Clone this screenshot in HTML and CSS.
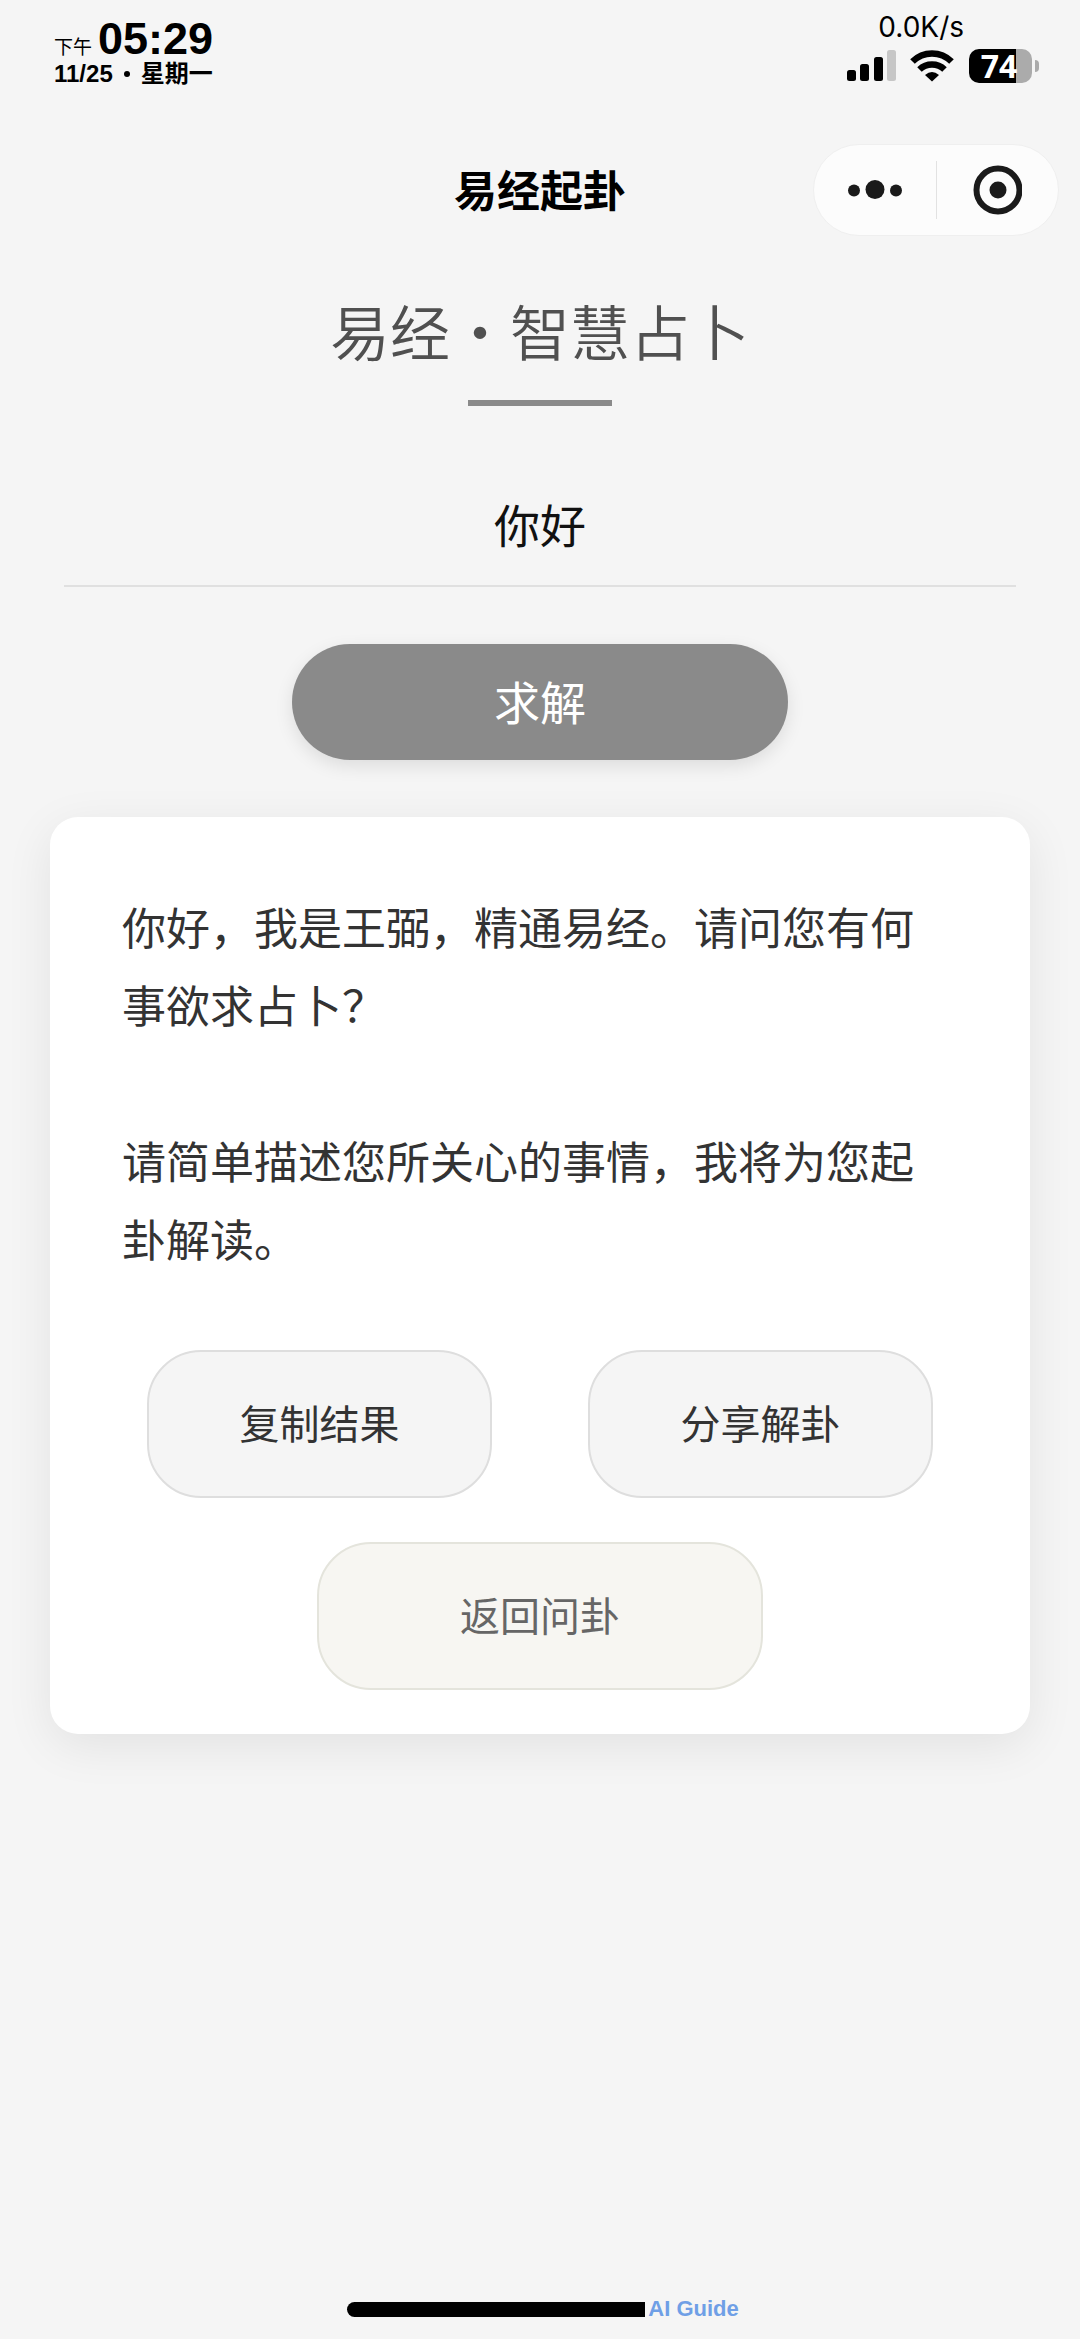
FILE: index.html
```html
<!DOCTYPE html>
<html lang="zh-CN">
<head>
<meta charset="utf-8">
<meta name="viewport" content="width=device-width, initial-scale=1">
<title>易经起卦</title>
<link rel="stylesheet" href="styles.css">
</head>
<body>
<div class="page">
  <div class="status">
    <div class="clock">
      <div class="clock-time"><span class="period">下午</span><time class="time">05:29</time></div>
      <div class="date">11/25<span class="date-dot"></span>星期一</div>
    </div>
    <div class="device">
      <div class="speed">0.0K/s</div>
      <div class="indicators">
        <svg class="signal" width="50" height="34" viewBox="0 0 50 34" aria-hidden="true">
          <rect x="0" y="21" width="9" height="11" rx="2.500"/>
          <rect x="13" y="15" width="9" height="17" rx="2.500"/>
          <rect x="27" y="8" width="9" height="24" rx="2.500"/>
          <rect x="40" y="1" width="9" height="31" rx="2.500" fill="#c6c6c6"/>
        </svg>
        <svg class="wifi" width="44" height="34" viewBox="0 0 44 34" aria-hidden="true">
          <path d="M2.500 12.500A27.500 27.500 0 0 1 41.500 12.500" fill="none" stroke="#000" stroke-width="6.500"/>
          <path d="M9.500 20.500A18 18 0 0 1 34.500 20.500" fill="none" stroke="#000" stroke-width="6.500"/>
          <path d="M22 32.500L15 26Q22 20 29 26Z"/>
        </svg>
        <div class="battery"><span class="battery-body">74</span><span class="battery-cap"></span></div>
      </div>
    </div>
  </div>

  <header class="navbar">
    <h1 class="nav-title">易经起卦</h1>
    <div class="capsule">
      <button class="capsule-btn" type="button" aria-label="更多">
        <svg width="54" height="50" viewBox="0 0 54 50"><circle cx="6" cy="25.500" r="6"/><circle cx="27" cy="24.500" r="9.500"/><circle cx="48" cy="25.500" r="6"/></svg>
      </button>
      <button class="capsule-btn" type="button" aria-label="关闭">
        <svg width="50" height="50" viewBox="0 0 50 50"><circle cx="26" cy="25" r="21.500" fill="none" stroke="#1a1a1a" stroke-width="6"/><circle cx="26" cy="25" r="8.500"/></svg>
      </button>
    </div>
  </header>

  <main class="content">
    <h2 class="hero">易经·智慧占卜</h2>
    <form class="ask" onsubmit="return false">
      <input class="question" type="text" value="你好" aria-label="问题">
      <button class="solve" type="submit">求解</button>
    </form>
    <section class="card">
      <div class="answer">
        <p>你好，我是王弼，精通易经。请问您有何事欲求占卜？</p>
        <p>请简单描述您所关心的事情，我将为您起卦解读。</p>
      </div>
      <div class="actions">
        <button class="action" type="button">复制结果</button>
        <button class="action" type="button">分享解卦</button>
      </div>
      <button class="action back" type="button">返回问卦</button>
    </section>
  </main>

  <footer class="home">
    <span class="home-bar"></span><span class="guide">AI Guide</span>
  </footer>
</div>
</body>
</html>
```
FILE: styles.css
```css
* { box-sizing: border-box; }

body {
  margin: 0;
  background: #f5f5f5;
  color: #000;
  font-family: "Noto Sans CJK SC", sans-serif;
}

button, input { font: inherit; margin: 0; padding: 0; border: 0; background: none; }
h1, h2, p { margin: 0; }
svg { display: block; }

.page { display: flex; flex-direction: column; min-height: 100vh; }

/* Status bar */
.status {
  display: flex;
  justify-content: space-between;
  height: 128px;
  padding: 12px 41px 0 54px;
}
.clock { padding-top: 6px; font-family: "Liberation Sans", "Noto Sans CJK SC", sans-serif; }
.clock-time { display: flex; align-items: baseline; gap: 6px; height: 42px; line-height: 42px; }
.period { font-size: 19px; line-height: 24px; }
.time { font-size: 45px; font-weight: 700; }
.date { display: flex; align-items: center; font-size: 24px; font-weight: 700; line-height: 28px; }
.date-dot { width: 6px; height: 6px; margin: 0 11px; border-radius: 50%; background: #000; }

.device { display: flex; flex-direction: column; align-items: flex-end; }
.speed {
  padding-right: 75px;
  font-family: Inter, sans-serif;
  font-size: 28px;
  line-height: 30px;
}
.indicators { display: flex; align-items: center; padding-top: 7px; }
.wifi { margin: 0 15px 0 13px; }
.battery { display: flex; align-items: center; gap: 3px; }
.battery-body {
  width: 63px;
  height: 34px;
  padding-right: 3px;
  border-radius: 10px;
  background: linear-gradient(to right, #000 47px, #ababab 47px);
  color: #fff;
  font: 700 32px/34px "Noto Sans", sans-serif;
  text-align: center;
}
.battery-cap { width: 4px; height: 12px; border-radius: 0 4px 4px 0; background: #ababab; }

/* Navigation bar */
.navbar {
  display: grid;
  grid-template-columns: 1fr auto 1fr;
  align-items: center;
  height: 124px;
  padding: 0 21px;
}
.nav-title { grid-column: 2; padding-bottom: 4px; font-size: 43px; line-height: 60px; font-weight: 700; }
.capsule {
  display: flex;
  justify-self: end;
  width: 246px;
  height: 92px;
  border: 1px solid #efefef;
  border-radius: 46px;
  background: #fcfcfc;
  align-items: center;
}
.capsule-btn { flex: 1; display: flex; justify-content: center; height: 58px; align-items: center; fill: #1a1a1a; }
.capsule-btn + .capsule-btn { border-left: 1px solid #e2e2e2; }

/* Content */
.content { flex: 1; padding: 0 50px; }
.hero {
  display: flex;
  flex-direction: column;
  align-items: center;
  padding-top: 38px;
  color: #505050;
  font-size: 60px;
  line-height: 80px;
  font-weight: 350;
}
.hero::after { content: ""; width: 144px; height: 6px; margin-top: 30px; background: #8a8a8a; }

.ask { display: flex; flex-direction: column; align-items: center; padding: 58px 14px 0; }
.question {
  width: 100%;
  height: 123px;
  padding-bottom: 4px;
  border-bottom: 2px solid #e0e0e0;
  color: #111;
  font-size: 46px;
  text-align: center;
  outline: none;
}
.solve {
  width: 496px;
  height: 116px;
  margin-top: 57px;
  padding-bottom: 4px;
  border-radius: 58px;
  background: #8a8a8a;
  box-shadow: 0 6px 18px rgba(0, 0, 0, 0.1);
  color: #fff;
  font-size: 46px;
}

.card {
  display: flex;
  flex-direction: column;
  align-items: center;
  margin-top: 57px;
  padding: 70px 72px 44px;
  border-radius: 28px;
  background: #fff;
  box-shadow: 0 12px 48px rgba(0, 0, 0, 0.08);
}
.answer {
  display: flex;
  flex-direction: column;
  gap: 78px;
  width: 100%;
  padding-right: 24px;
  color: #333;
  font-size: 44px;
  line-height: 78px;
}
.actions { display: flex; justify-content: center; gap: 96px; margin-top: 73px; }
.action {
  width: 345px;
  height: 148px;
  padding-bottom: 4px;
  border: 2px solid #dedede;
  border-radius: 54px;
  background: #f5f5f5;
  color: #333;
  font-size: 40px;
}
.back {
  width: 446px;
  margin-top: 44px;
  border-color: #e4e4dc;
  background: #f7f6f2;
  color: #666;
}

/* Home indicator */
.home { display: flex; justify-content: center; align-items: center; gap: 3px; height: 60px; padding-left: 6px; }
.home-bar { width: 298px; height: 15px; border-radius: 8px 0 0 8px; background: #000; }
.guide { color: #6f9fe6; font: 700 22px/24px "Liberation Sans", sans-serif; }
```
